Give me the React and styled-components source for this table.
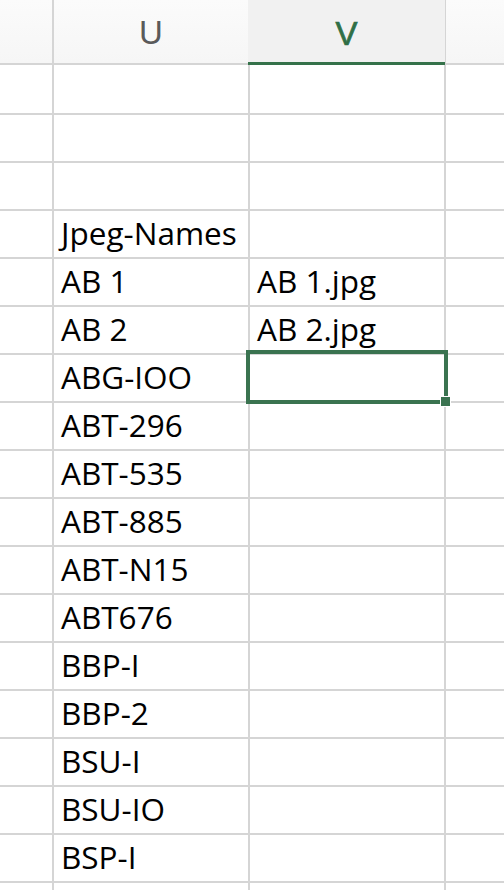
import React from 'react';
import styled, { createGlobalStyle } from 'styled-components';

const GlobalStyle = createGlobalStyle`
  html, body {
    margin: 0;
    padding: 0;
    background: #ffffff;
    overflow: hidden;
  }
`;

const Sheet = styled.div`
  width: 504px;
  height: 890px;
  overflow: hidden;
  display: grid;
  grid-template-columns: 52px 194px 194px 1fr;
  grid-template-rows: 63px 48px;
  grid-auto-rows: 46px;
  gap: 2px;
  background: #d5d5d5;
`;

const HeaderCell = styled.div`
  display: flex;
  align-items: center;
  justify-content: center;
  background: ${props => props.selected
    ? '#f1f1f1'
    : 'linear-gradient(180deg, #fbfbfb 0%, #f6f6f6 100%)'};
  box-shadow: ${props => props.selected ? 'inset 0 -3px 0 #35724a' : 'none'};
  margin-bottom: ${props => props.selected ? '-2px' : '0'};
  margin-left: ${props => props.selected ? '-2px' : '0'};
  margin-right: ${props => props.selected ? '-1px' : '0'};
  font-family: "Liberation Sans", Arial, sans-serif;
  font-size: 33px;
  padding-top: 2px;
  color: ${props => props.selected ? '#2f6f46' : '#5a5a5a'};
  -webkit-text-stroke: ${props => props.selected ? '0.7px #2f6f46' : '0'};
`;

const Cell = styled.div`
  position: relative;
  z-index: ${props => props.active ? 2 : 'auto'};
  display: flex;
  align-items: flex-end;
  background: #ffffff;
  padding: 0 0 9px 7px;
  font-family: "Open Sans", "Liberation Sans", sans-serif;
  font-size: 31.5px;
  line-height: 1;
  color: #000000;
  white-space: nowrap;
`;

const Selection = styled.div`
  position: absolute;
  top: -5px;
  left: -4px;
  right: -4px;
  bottom: -3px;
  border: 4px solid #3a7350;
  pointer-events: none;
`;

const FillHandle = styled.div`
  position: absolute;
  right: -6px;
  bottom: -6px;
  width: 9px;
  height: 9px;
  background: #3a7350;
  box-shadow: 0 0 0 1px #ffffff;
`;

const rows = [
  ['', ''],
  ['', ''],
  ['', ''],
  ['Jpeg-Names', ''],
  ['AB 1', 'AB 1.jpg'],
  ['AB 2', 'AB 2.jpg'],
  ['ABG-IOO', '', true],
  ['ABT-296', ''],
  ['ABT-535', ''],
  ['ABT-885', ''],
  ['ABT-N15', ''],
  ['ABT676', ''],
  ['BBP-I', ''],
  ['BBP-2', ''],
  ['BSU-I', ''],
  ['BSU-IO', ''],
  ['BSP-I', ''],
  ['', ''],
];

export default function App() {
  return (
    <>
      <GlobalStyle />
      <Sheet>
        <HeaderCell />
        <HeaderCell>U</HeaderCell>
        <HeaderCell selected>V</HeaderCell>
        <HeaderCell />
        {rows.map(([u, v, active], i) => (
          <React.Fragment key={i}>
            <Cell />
            <Cell>{u}</Cell>
            <Cell active={active}>
              {v}
              {active && (
                <Selection>
                  <FillHandle />
                </Selection>
              )}
            </Cell>
            <Cell />
          </React.Fragment>
        ))}
      </Sheet>
    </>
  );
}
